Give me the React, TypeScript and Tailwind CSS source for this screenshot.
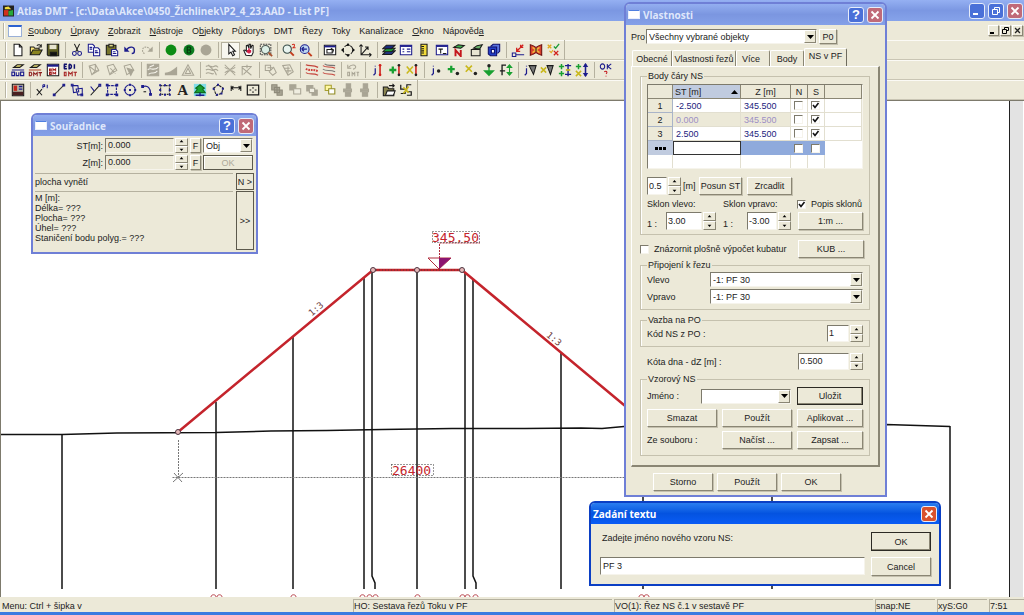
import type { ReactNode } from "react";
import clsx from "clsx";

const RAISED = "border border-t-white border-l-white border-r-[#8a8674] border-b-[#8a8674] bg-[#ece9d8]";
const SUNKEN = "border border-t-[#7d7a6c] border-l-[#7d7a6c] border-r-[#f6f4ec] border-b-[#f6f4ec]";

const G = "#a9a595";
const N = "#1c1c8c";

/* Toolbar glyphs, all on a 16x16 grid */
const glyphs: Record<string, ReactNode> = {
    new: <path d="M3.5 1.5h6l3 3v10h-9zM9.5 1.5v3h3" fill="#fff" />,
    open: <><path d="M1.5 13.5v-9h4l1 1.500h5v2" fill="#ffe97a" /><path d="M1.500 13.500l3-5.500h10.500l-3 5.500z" fill="#8a8420" /><path d="M9 3c2-2 4-1 5 1M14 1.500v3h-3" /></>,
    save: <><path d="M1.500 1.500h13v13h-12l-1-1z" fill="#5c5c20" /><path d="M4 2h8v5H4z" fill="#e6e3cf" stroke="none" /><path d="M5 10.500h7v4H5z" fill="#111" /></>,
    cut: <><path d="M5 1l4.500 9M11 1L6.500 10" /><circle cx="5" cy="12" r="2.200" stroke={N} /><circle cx="11" cy="12" r="2.200" stroke={N} /></>,
    copy: <><path d="M1.500 1.500h5l2 2v7h-7z" fill="#fff" stroke={N} /><path d="M7.500 5.500h5l2 2v7h-7z" fill="#fff" stroke={N} /><path d="M3 5h3M3 7h3M9 9h3M9 11h4" stroke={N} /></>,
    paste: <><path d="M1.500 2.500h11v11h-11z" fill="#77752c" /><path d="M4.500 1.500h5v3h-5z" fill="#ded98a" /><path d="M7.500 7.500h5l2 2v5h-7z" fill="#fff" stroke={N} /><path d="M9 10h3M9 12h4" stroke={N} /></>,
    undo: <><path d="M4 8c3-5 10-4 9 1 0 2-1 3-3 3" stroke={N} strokeWidth="1.600" /><path d="M1.500 4v6h6z" fill={N} stroke="none" /></>,
    redo: <><path d="M12 8c-3-5-10-4-9 1 0 2 1 3 3 3" stroke={G} strokeDasharray="2 1" /><path d="M14.500 4v6h-6z" fill={G} stroke="none" /></>,
    green: <circle cx="8" cy="8" r="6.200" fill="#0c8c14" stroke="none" />,
    greenB: <><circle cx="8" cy="8" r="6.200" fill="#0c7c20" stroke="none" /><path d="M6 4.500h3l1 1.500-1 2H6zM6 8h3l1 2-1 1.500H6zM6 4.500v7" stroke="#04330a" /></>,
    gray: <circle cx="8" cy="8" r="6.200" fill={G} stroke="none" />,
    pointer: <path d="M5.500 1.500v11l2.500-2 2 4 2-1-2-4h3z" fill="#fff" />,
    hand: <><path d="M4.500 14L2 8.500l1.500-.500 1.500 1.500V3l1.500-.500L8 6V1.500l1.500 0 .5 5 1.500-4 1.200.5v8L11 14.500z" fill="#fff" /><path d="M8 6v6M5.500 9.500h5M6.500 8v3M9.500 8v3" stroke="#d11f44" strokeWidth="1.800" /></>,
    zoomFrame: <><path d="M1.500 1.500h12v12h-12z" stroke="#444" strokeDasharray="2 1" /><circle cx="7.500" cy="7.500" r="4.700" fill="#dcefe6" stroke="#4d5a55" /><path d="M11 11l4 4" stroke="#a8502c" strokeWidth="2" /></>,
    zoom2: <><circle cx="6" cy="7" r="4.700" fill="#e7f3ee" stroke="#354a46" /><path d="M9.500 10.500l4 4" stroke="#c23c1c" strokeWidth="2.200" /><path d="M11.500 2c3-2 4 1 1 3.500h3" stroke="#d12a1c" /></>,
    zoomBack: <><circle cx="6.500" cy="7" r="5" fill="#bcd6f0" stroke={N} /><path d="M3 7h6M3 7l2.500-2.500M3 7l2.500 2.500" stroke={N} strokeWidth="1.600" /><path d="M10.500 11l4 4" stroke="#c23c1c" strokeWidth="2.200" /></>,
    sheetRot: <><path d="M1.500 2.500h13v11h-13z" fill="#fff" /><path d="M1.500 4h13" stroke={N} strokeWidth="2" /><path d="M4.500 7.500h6v4h-6z" /><path d="M9 6l3 2-1 3" /></>,
    compass: <><circle cx="8" cy="8" r="5.500" strokeDasharray="5 2" /><path d="M8 0l2.500 3h-5zM8 16l2.500-3h-5zM0 8l3-2.500v5zM16 8l-3-2.500v5z" fill="#111" stroke="none" /></>,
    axis: <path d="M3.500 2v11.500H15M3.500 13.500l8-9M1.500 4l2-2 2 2M8 4.500h3.500V8M13 11.500l2 2-2 2" />,
    layers: <><path d="M1 13l4-4h10l-4 4z" fill="#27389c" /><path d="M1 10l4-4h10l-4 4z" fill="#1d9c38" /><path d="M1 6.500l4-4h10l-4 4z" fill="#1a2a7c" /></>,
    list: <><path d="M1.500 2.500h13v11h-13z" fill="#fff" stroke={N} /><path d="M1.500 3.500h13" stroke={N} strokeWidth="2" /><path d="M4 7h2M4 10h2M9 7h4M9 10h4" stroke={N} /></>,
    ruler: <><path d="M4.500 1.500h7v13h-7z" fill="#f3dc3a" /><path d="M5 4h3M5 6.500h3M5 9h3M5 11.500h3" /></>,
    winT: <><path d="M1.500 2.500h13v11h-13z" fill="#fff" stroke={N} /><path d="M1.500 3.500h13" stroke={N} strokeWidth="2" /><path d="M4 7h5M6.500 7v5M9 12h4" /></>,
    handN: <><path d="M2 5l5-3 7 1-4 3z" fill="#3fb04c" /><path d="M4 15V8l6 7V8" stroke="#c4161c" strokeWidth="2.200" /></>,
    handBox: <><path d="M1.500 7.500h10v7h-10z" fill="#e7e4d2" /><path d="M4 6l4-3 6-1-3 5z" fill="#68b06a" /></>,
    cube: <><path d="M4 4l3-2.500h7.500v8L12 12" stroke="#10106c" fill="#5a74e0" /><path d="M1.500 4.500H11v10H4l-2.500-2z" fill="#2440c8" stroke="#10106c" /><path d="M5 7.500h3.500v4H5z" fill="#fff" stroke="#10106c" /></>,
    angle: <><path d="M1.500 11.500h4v4h-4zM5.500 13.500H15" stroke={N} /><path d="M14 2L6.500 9.500M6.500 5.500v4h4M11 2v3h3" stroke="#d1201c" strokeWidth="1.500" /></>,
    redBlock: <><path d="M1.500 2l3 1 3.500 2 3.500-2 3-1v12l-3-1L8 11l-3.500 2-3 1z" fill="#d8402c" stroke="#6a1010" /><path d="M4 5l8 6M12 5l-8 6" stroke="#f0b63a" strokeWidth="1.800" /><path d="M8 6v4" /></>,
    checks: <><path d="M2 2l4 4M6 2L2 6" stroke="#e0a71c" strokeWidth="1.500" /><path d="M9 4l2 2 4-5" stroke="#1d9c38" strokeWidth="1.500" /><path d="M4 9l2 2 2-3" stroke="#e0a71c" /><path d="M9 9l5 5M14 9l-5 5" stroke="#d1201c" strokeWidth="1.500" /></>,
    budo: <><path d="M3 5l4-3 7 0-4 3z" fill="#eadf77" /><path d="M1 8h14M1 10.500h3v4H1zM6 10.500v4h3v-4M11 10.500h3.500v4H11z" stroke={N} strokeWidth="1.300" /></>,
    dmtHand: <><path d="M3 5l4-3 7 0-4 3z" fill="#eadf77" /><path d="M1 8h14" stroke="#b84a2c" /><path d="M1.500 10.500h2l1 2-1 2h-2zM6.500 15v-4l2 2 2-2v4M12 11h4M14 11v4" stroke="#8c1c1c" /></>,
    dmtWin: <><path d="M1.500 1.500h13v13h-13z" fill="#fff" /><path d="M1.500 3h13" stroke={N} strokeWidth="2.500" /><path d="M4 7h2v2H4zM8 9V6.500l1.500 1.500L11 6.500V9M4 11h2v2H4zM8 13v-2.500l1.500 1.500 1.500-1.500V13" stroke="#a42020" /></>,
    edi: <><path d="M1 1.500h3.500M1 4h3M1 6.500h3.500M1.500 1.500v5M7 1.500v5c3 0 4-5 0-5M13 1.500v5" stroke="#10106c" strokeWidth="1.700" /><path d="M1.500 10.500v4h2v-4zM6.500 15v-4.500l2 2 2-2V15M12 10.500h4M14 10.500V15" stroke="#a42020" /></>,
    tri: <path d="M2.500 3.500l7-2 4 7-8 5zM2.500 3.500l7 5.500h4M9.500 1.500V9l-4 4.500" stroke={G} />,
    tri2: <path d="M2.500 3.500l7-2 4 7-8 5zM6 6l6 6M12 6l-6 6" stroke={G} />,
    tri3: <><path d="M2.500 3.500l7-2 4 7-8 5z" stroke={G} /><path d="M6 6l7 2-3 6z" fill={G} stroke={G} /></>,
    mesh: <><path d="M1.500 1.500h13v13h-13z" fill={G} stroke={G} /><path d="M2 8c3-4 6 2 12-3M3 13c3-4 6 1 10-4M4 5c2-2 4-1 5-3" stroke="#f5f3ea" /></>,
    hill: <path d="M1 14V11c5 0 8-2 14-7v10z" fill={G} stroke="none" />,
    warn: <path d="M8 2L1.500 14h13zM8 6L5 12h6z" stroke={G} />,
    contour: <path d="M1 4c4-3 6 2 9 0s4 0 5 1M1 8c4-3 6 2 9 0s4 0 5 1M1 12c4-3 6 2 9 0M4 2c2 4 8 6 9 12" stroke={G} />,
    contour2: <path d="M2 2l12 12M14 2L2 14M2 5c4 3 8 3 12 0M2 11c4-3 8-3 12 0" stroke={G} />,
    contour3: <path d="M2.500 14V4h11M2 5l11 9M13 4L4 13M8 2v4" stroke={G} />,
    gridA: <path d="M1.500 2.500h6v6h-6zM6 10l5-5 3 6-4 3zM4 5.500h7" stroke={G} />,
    gridB: <path d="M2 3l8-1 4 8-6 4zM4 6h6M6 9h6M8 4v8" stroke={G} />,
    hatch: <><path d="M1 2c4 2 8 0 14 3M1 11c4 3 8 0 14 3" stroke="#c4443c" strokeWidth="1.400" /><path d="M1 6.500c4 3 8 0 14 3" stroke="#d1403c" strokeWidth="2.200" strokeDasharray="2 1" /></>,
    hatch2: <><path d="M1 3c4 3 8 0 14 3M1 11c4 3 8 0 14 3" stroke="#c4443c" /><path d="M1 7c4 3 8 0 14 3M3 1c3 3 8 1 12 2" stroke="#777" /></>,
    undoDmt: <><path d="M3 5c3-4 9-3 8 0-.5 2-2 2-3 2M2 2v4h4" stroke={G} /><path d="M2 10.500v4h2v-4zM7 15v-4l1.500 1.500L10 11v4M12 10.500h3M13.500 10.500V15" stroke={G} /></>,
    lineI: <><path d="M11.500 2v12" stroke="#d1201c" strokeWidth="1.800" /><circle cx="11.500" cy="2.500" r="1.500" fill="#d1201c" stroke="none" /><circle cx="11.500" cy="13.500" r="1.500" fill="#d1201c" stroke="none" /><path d="M6 6v6l-2 2M6 3v1" stroke={N} strokeWidth="1.400" /></>,
    lineAdd: <><path d="M12.500 2v12" stroke="#d1201c" strokeWidth="1.800" /><circle cx="12.500" cy="2.500" r="1.500" fill="#222" stroke="none" /><circle cx="12.500" cy="13.500" r="1.500" fill="#222" stroke="none" /><path d="M5.500 4v8M1.500 8h8" stroke="#18a030" strokeWidth="2.600" /></>,
    lineDel: <><path d="M12.500 2v12" stroke="#d1201c" strokeWidth="1.800" /><circle cx="12.500" cy="2.500" r="1.500" fill="#222" stroke="none" /><circle cx="12.500" cy="13.500" r="1.500" fill="#222" stroke="none" /><path d="M2 4l7 8M9 4l-7 8" stroke="#c9b81c" strokeWidth="1.800" /></>,
    ptI: <><path d="M5 6v6l-2 2M5 3v1" stroke={N} strokeWidth="1.400" /><circle cx="11" cy="9" r="2" fill="#222" stroke="none" /></>,
    ptAdd: <><path d="M6 3v8M2 7h8" stroke="#18a030" strokeWidth="2.600" /><circle cx="13" cy="12" r="2" fill="#222" stroke="none" /></>,
    ptDel: <><path d="M2 3l7 7M9 3l-7 7" stroke="#c9b81c" strokeWidth="1.800" /><circle cx="13" cy="12" r="2" fill="#222" stroke="none" /></>,
    ptMove: <><path d="M8 3v10M3 9h10l-5 5z" fill="#18a030" stroke="#18a030" strokeWidth="1.500" /><circle cx="8" cy="3" r="2" fill="#222" stroke="none" /></>,
    heights: <><path d="M8 2.500H3.500V14M1 9h6" strokeWidth="1.500" /><path d="M12 3v10M9.500 5L12 2l2.500 3zM9.500 11l2.500 3 2.500-3z" fill="#18a030" stroke="#18a030" /></>,
    coneI: <><path d="M4 6v6l-2 2M4 3v1" stroke={N} strokeWidth="1.400" /><path d="M7 3h8l-3 10z" fill="#777" /></>,
    coneX: <><path d="M1 5l6 6M7 5l-6 6" stroke="#c9b81c" strokeWidth="1.800" /><path d="M8 3h7l-3 10z" fill="#777" /></>,
    pairAdd: <><path d="M11.500 1v14M8 3h7M8 13h7" stroke={N} strokeWidth="1.600" /><path d="M4 1v6M1 4h6M4 9v6M1 12h6" stroke="#18a030" strokeWidth="1.700" /><path d="M9 8h5" stroke="#c9b81c" strokeWidth="2" /></>,
    pairDel: <><path d="M12 1v14" stroke={N} strokeWidth="1.800" /><path d="M10 4l2-3 2 3zM10 12l2 3 2-3z" fill={N} stroke={N} /><path d="M4 1v6M1 4h6" stroke="#18a030" strokeWidth="1.700" /><path d="M1 9l6 6M7 9l-6 6" stroke="#c9b81c" strokeWidth="1.700" /></>,
    ok: <><ellipse cx="4" cy="4" rx="2.500" ry="3" stroke={N} /><path d="M9.500 1v6M14 1l-4 3 4 3" stroke={N} /><path d="M6 10c3-2 4 1 2 2.500M8 14.500v1" stroke="#c4161c" /></>,
    picture: <><path d="M1.500 1.500h13v13h-13z" fill="#b8b4a4" /><path d="M3 3h4v6H3z" fill="#c4261c" stroke="none" /><path d="M2 10h12v4H2z" fill="#4a2020" stroke="none" /><path d="M9 4h4M9 7h4" stroke={N} strokeWidth="1.600" /></>,
    xpt: <><path d="M2 7l6 7M8 7l-6 7" /><path d="M9 2v4M9 2h2v2H9M14 2v4" stroke={N} /></>,
    seg: <><path d="M3 13L13 3" stroke="#333" /><path d="M1.500 12.500h2v2h-2zM12.500 1.500h2v2h-2z" fill={N} stroke={N} /></>,
    poly: <path d="M3 3h6l1 7-6 1zM7 7l7-1v7l-5 1zM1.500 1.500h2v2h-2zM12.500 12.500h2v2h-2z" stroke={N} />,
    ticks: <><path d="M3 14L13 3" /><path d="M3 4l4 5M12.500 1.500h2v2h-2z" stroke={N} strokeWidth="1.300" /></>,
    rect: <><path d="M3 3h10v10H3z" stroke={N} strokeDasharray="3 1" /><path d="M1.500 1.500h2v2h-2zM12.500 1.500h2v2h-2zM1.500 12.500h2v2h-2zM12.500 12.500h2v2h-2z" fill={N} stroke={N} /></>,
    circle: <><circle cx="8" cy="8" r="6" stroke={N} /><path d="M7.500 7.500h1v1h-1zM7.500 1.500h1v1h-1zM7.500 13.500h1v1h-1zM1.500 7.500h1v1h-1zM13.500 7.500h1v1h-1z" fill={N} stroke={N} /></>,
    arc: <><path d="M3 4c6-2 9 2 9 8" stroke={N} strokeWidth="1.400" /><path d="M2 3h2v2H2zM11 12h2v2h-2z" fill={N} stroke={N} /><path d="M4 10h3" /></>,
    area: <><path d="M3 3h10v10H3z" stroke="#333" strokeDasharray="2 1" /><path d="M2 2h1v1H2zM7.500 2h1v1h-1zM13 2h1v1h-1zM2 7.500h1v1H2zM13 7.500h1v1h-1zM2 13h1v1H2zM7.500 13h1v1h-1zM13 13h1v1h-1z" fill={N} stroke={N} /></>,
    tree: <><path d="M1 1h14v14H1z" fill="#7fdce8" stroke="none" /><path d="M8 2l5 4-2 1 3 4H2l3-4-2-1z" fill="#18a030" stroke="#0d6c1c" /><path d="M8 11v4M3 14h10" stroke={N} strokeWidth="1.600" /></>,
    lasso: <><path d="M3 6l5-4 6 4-2 6-6 2z" strokeDasharray="3 1" /><path d="M7.500 1.500h1v1h-1zM2.500 6h1v1h-1zM13 6h1v1h-1zM6.500 13h1v1h-1zM11.500 11.500h1v1h-1z" fill={N} stroke={N} /></>,
    dim: <path d="M2.500 3v6M13.500 3v6M3 5.500h10M5 3.500l-2 2 2 2M11 3.500l2 2-2 2" />,
    frame: <><path d="M1.500 2.500h13v11h-13z" strokeWidth="1.400" /><path d="M8 4.500v2M8 9.500v2M4 8h2M10 8h2" /></>,
    stackA: <path d="M2 2h6v6H2zM5 5h6v6H5zM8 8h6v6H8z" fill={G} stroke="#8e8a7a" />,
    stackB: <><path d="M2 2h7v6H2z" fill={G} stroke={G} /><path d="M6.500 6.500h8v6h-8z" fill="#efede0" stroke={G} /></>,
    stackC: <><path d="M2 3h7v6H2zM8 8h6v6H8z" fill={G} stroke={G} /><path d="M5 6h6v5H5z" fill="#efede0" stroke={G} /></>,
    stackY: <><path d="M2.500 2.500h7v6h-7z" fill="#fff8a0" stroke="#a8a030" /><path d="M6.500 6.500h7v6h-7z" fill="#fff" stroke="#8f8a20" /></>,
    grp: <path d="M6 1h5v5H6zM3 7h9v3H3zM5 11h6v4H5z" fill={G} stroke={G} />,
    exportIc: <><path d="M1.500 4.500h5l1 2h6v8h-12z" fill="#8a8450" /><path d="M4 14l2-5h9l-2 5z" fill="#fff" /><path d="M8 3h6M12 1l2 2-2 2" /></>,
    cut2: <><path d="M2 2v5h5M2 12h5v-2M14 2H9v5M9 14h5v-4H9" strokeWidth="1.400" /><path d="M5 5l6 6M11 4l-6 8" stroke="#c9b81c" strokeWidth="1.800" /></>,
};

const toolbars: string[][][] = [
    [
        ["new", "open", "save"],
        ["cut", "copy", "paste", "undo", "redo"],
        ["green", "greenB", "gray"],
        ["pointer", "hand", "zoomFrame"],
        ["zoom2", "zoomBack"],
        ["sheetRot", "compass", "axis"],
        ["layers", "list", "ruler", "winT", "handN", "handBox", "cube"],
        ["angle", "redBlock", "checks"],
    ],
    [
        ["budo", "dmtHand", "dmtWin", "edi"],
        ["tri", "tri2", "tri3"],
        ["mesh", "hill", "warn"],
        ["contour", "contour2", "contour3"],
        ["gridA", "gridB"],
        ["hatch", "hatch2"],
        ["undoDmt"],
        ["lineI", "lineAdd", "lineDel"],
        ["ptI", "ptAdd", "ptDel", "ptMove", "heights"],
        ["coneI", "coneX", "pairAdd", "pairDel"],
        ["ok"],
    ],
    [
        ["picture"],
        ["xpt", "seg", "poly", "ticks", "rect", "circle", "arc", "area", "textA", "tree", "lasso", "dim", "frame"],
        ["stackA", "stackB", "stackC", "stackY", "grp", "grp"],
        ["exportIc", "cut2"],
    ],
];

const groupWidth: Record<number, string> = {
    1: "w-[18px]",
    2: "w-[35px]",
    3: "w-[53px]",
    4: "w-[70px]",
    5: "w-[88px]",
    6: "w-[106px]",
    7: "w-[123px]",
    13: "w-[229px]",
};

const menus = [
    ["", "S", "oubory"],
    ["", "Ú", "pravy"],
    ["", "Z", "obrazit"],
    ["", "N", "ástroje"],
    ["O", "b", "jekty"],
    ["Půdorys", "", ""],
    ["DMT", "", ""],
    ["Řezy", "", ""],
    ["Toky", "", ""],
    ["Kanalizace", "", ""],
    ["", "O", "kno"],
    ["Nápověd", "a", ""],
];

function Toolbar({ groups, end }: { groups: string[][]; end: boolean }) {
    return (
        <div className="flex h-5 items-center border-t border-t-[#fbfaf5] border-b border-b-[#c9c5b4] pl-[5px]">
            <span className="mr-[2px] h-4 w-[2px] border-l border-[#b9b5a3] bg-white" />
            {groups.map((names, i) => (
                <div key={i} className="flex items-center">
                    {i > 0 && <span className="mr-[2px] ml-[3px] h-4 w-px bg-[#b5b19f]" />}
                    <div className={clsx("flex", groupWidth[names.length])}>
                        {names.map((name, k) => (
                            <button
                                key={k}
                                aria-label={name}
                                className={clsx(
                                    "flex h-[17px] flex-1 items-center justify-center",
                                    name === "pointer" && "border border-[#b5b19f] bg-[#f8f7f0]"
                                )}
                            >
                                {name === "textA" ? (
                                    <span className="font-['Liberation_Serif',serif] text-[15px] leading-4 font-bold">A</span>
                                ) : (
                                    <svg width="14" height="14" viewBox="0 0 16 16" fill="none" stroke="#1a1a1a" strokeWidth="1.2" className="shrink-0">
                                        {glyphs[name]}
                                    </svg>
                                )}
                            </button>
                        ))}
                    </div>
                </div>
            ))}
            {end && <span className="ml-[2px] h-5 w-px bg-[#b5b19f]" />}
        </div>
    );
}

function Cross({ size }: { size: number }) {
    return (
        <svg width={size} height={size} viewBox="0 0 10 10" stroke="currentColor" strokeWidth="1.8">
            <path d="M1.500 1.500l7 7M8.500 1.500l-7 7" />
        </svg>
    );
}

function CapButton({ label, color, children }: { label: string; color: string; children: ReactNode }) {
    return (
        <button
            aria-label={label}
            className={clsx("flex h-4 w-4 items-center justify-center rounded-[3px] border border-[#e6ecfa] text-[13px] leading-none font-bold text-white", color)}
        >
            {children}
        </button>
    );
}

function Window({ title, active, className, children }: { title: string; active?: boolean; className: string; children: ReactNode }) {
    return (
        <section
            className={clsx(
                "absolute flex flex-col rounded-t-md border-2 bg-[#ece9d8]",
                active ? "border-[#0b3fc4]" : "border-[#6f7fd6]",
                className
            )}
        >
            <header
                className={clsx(
                    "flex h-[21px] shrink-0 items-center gap-[3px] rounded-t px-[2px]",
                    active
                        ? "bg-linear-to-b from-[#2a7df0] via-[#0453e0] to-[#0a5cf5] text-white"
                        : "bg-linear-to-b from-[#93aef0] via-[#7b96e0] to-[#84a0e8] text-[#dfe7fb]"
                )}
            >
                {!active && <span className="h-[9px] w-3 border border-[#e8eefc] border-t-[#4f7fe0] bg-white" />}
                <h2 className="flex-1 font-['Open_Sans',sans-serif] text-[10px] font-bold">{title}</h2>
                {!active && <CapButton label="Help" color="bg-[#4a70d8]">?</CapButton>}
                <CapButton label="Close" color={active ? "bg-[#d9512c]" : "bg-[#c06a78]"}><Cross size={10} /></CapButton>
            </header>
            {children}
        </section>
    );
}

function Button({ children, className, focus }: { children: ReactNode; className?: string; focus?: boolean }) {
    return (
        <button
            className={clsx(
                "flex items-center justify-center whitespace-nowrap",
                focus ? "border border-[#2c2a24] shadow-[inset_-1px_-1px_0_#8a8674]" : clsx(RAISED, "shadow-[1px_1px_0_#c4c0ae]"),
                className
            )}
        >
            {children}
        </button>
    );
}

function Spinner() {
    return (
        <span className="flex h-full w-[13px] flex-col">
            {["up", "down"].map((dir) => (
                <button key={dir} aria-label={dir} className={clsx("flex flex-1 items-center justify-center", RAISED)}>
                    <svg width="5" height="3" viewBox="0 0 6 4">
                        <path d={dir === "up" ? "M3 0l2.500 3h-5z" : "M3 4l2.500-3h-5z"} />
                    </svg>
                </button>
            ))}
        </span>
    );
}

function SpinField({ label, value, className, gray }: { label: string; value: string; className: string; gray?: boolean }) {
    return (
        <span className="flex h-full items-stretch gap-px">
            <input aria-label={label} defaultValue={value} className={clsx("pb-px outline-none", SUNKEN, gray ? "bg-[#ece9d8] px-[2px]" : "bg-white px-px", className)} />
            <Spinner />
        </span>
    );
}

function Select({ label, value, className }: { label: string; value: string; className?: string }) {
    return (
        <span className={clsx("relative flex h-[15px]", className)}>
            <select aria-label={label} className={clsx("w-full appearance-none bg-white pl-[2px] outline-none", SUNKEN)}>
                <option>{value}</option>
            </select>
            <span className={clsx("pointer-events-none absolute inset-y-px right-px flex w-3 items-center justify-center", RAISED)}>
                <svg width="7" height="4" viewBox="0 0 7 4"><path d="M0 0h7L3.500 4z" /></svg>
            </span>
        </span>
    );
}

function Check({ label, checked, children }: { label?: string; checked?: boolean; children?: ReactNode }) {
    return (
        <label className="flex items-center gap-[5px] whitespace-nowrap">
            <span className="grid">
                <input
                    type="checkbox"
                    aria-label={label}
                    defaultChecked={checked}
                    className={clsx("peer col-start-1 row-start-1 h-[9px] w-[9px] appearance-none bg-white", SUNKEN)}
                />
                <svg width="9" height="9" viewBox="0 0 9 9" fill="none" stroke="#111" strokeWidth="1.6" className="pointer-events-none invisible col-start-1 row-start-1 peer-checked:visible">
                    <path d="M2 4l2 2.500L7.500 2" />
                </svg>
            </span>
            {children}
        </label>
    );
}

function Group({ title, className, children }: { title: string; className: string; children: ReactNode }) {
    return (
        <fieldset className={clsx("border border-[#c5c1ae] px-[6px] shadow-[inset_1px_0_0_#fff]", className)}>
            <legend className="h-[10px] px-px leading-[10px]">{title}</legend>
            {children}
        </fieldset>
    );
}

const points = [
    { n: "1", st: "-2.500", z: "345.500", s: true },
    { n: "2", st: "0.000", z: "345.500", s: true, off: true },
    { n: "3", st: "2.500", z: "345.500", s: true },
];

function PointTable() {
    const cell = "border-r border-b border-[#e2dfd0]";
    const head = "border-r border-b border-[#8a8674] font-normal";
    return (
        <div className={clsx("h-[85px] overflow-hidden bg-white", SUNKEN)}>
            <table className="w-full table-fixed border-separate border-spacing-0 text-[#22227c]">
                <colgroup>
                    <col className="w-[25px]" />
                    <col className="w-[68px]" />
                    <col className="w-[50px]" />
                    <col className="w-[17px]" />
                    <col className="w-[17px]" />
                    <col />
                </colgroup>
                <thead className="bg-[#ece9d8] text-[#222]">
                    <tr className="h-[14px]">
                        <th className={head} />
                        <th className={clsx(head, "bg-[#c0cbdf] px-[2px]")}>
                            <span className="flex items-center justify-between">ST [m]<svg width="7" height="4" viewBox="0 0 7 4"><path d="M0 4h7L3.500 0z" /></svg></span>
                        </th>
                        <th className={head}>Z [m]</th>
                        <th className={head}>N</th>
                        <th className={head}>S</th>
                        <th className={head} />
                    </tr>
                </thead>
                <tbody>
                    {points.map((p) => (
                        <tr key={p.n} className={clsx("h-[14px]", p.off && "text-[#9c8fc4]")}>
                            <td className="border-r border-b border-[#a9b4c8] bg-[#ece9d8] text-center text-[#222]">{p.n}</td>
                            <td className={clsx(cell, "pl-[3px]", p.off && "bg-[#ece9d8]")}>{p.st}</td>
                            <td className={clsx(cell, "pl-[3px]", p.off && "bg-[#ece9d8]")}>{p.z}</td>
                            <td className={clsx(cell, "pl-[3px]")}><Check label={"N " + p.n} /></td>
                            <td className={clsx(cell, "pl-[3px]")}><Check label={"S " + p.n} checked={p.s} /></td>
                            <td className={cell} />
                        </tr>
                    ))}
                    <tr className="h-[14px] bg-[#8faadc]">
                        <td className="bg-[#c0cbdf] text-center text-[#111]">
                            <svg width="11" height="3" viewBox="0 0 11 3" className="mx-auto"><path d="M0 0h3v3H0zM4 0h3v3H4zM8 0h3v3H8z" /></svg>
                        </td>
                        <td className="border border-[#333] bg-white" />
                        <td />
                        <td className="pl-[3px]"><Check label="N new" /></td>
                        <td className="pl-[3px]"><Check label="S new" /></td>
                        <td className="bg-white" />
                    </tr>
                    <tr className="h-[14px]">
                        <td className={cell} /><td className={cell} /><td className={cell} /><td className={cell} /><td className={cell} /><td />
                    </tr>
                </tbody>
            </table>
        </div>
    );
}

function Properties() {
    const tab = "h-4 rounded-t-[2px] border border-b-0 border-t-white border-l-white border-r-[#8a8674] whitespace-nowrap";
    return (
        <Window title="Vlastnosti" className="top-[2px] left-[624px] w-[263px]">
            <div className="flex items-center gap-[2px] px-[5px] pt-1">
                <span className="w-[13px]">Pro</span>
                <Select label="Pro" value="Všechny vybrané objekty" className="w-[171px]" />
                <Button className="h-[15px] w-[18px]">P0</Button>
            </div>
            <div className="mt-1 flex items-end px-[6px]">
                <button className={clsx(tab, "w-10")}>Obecné</button>
                <button className={clsx(tab, "w-16")}>Vlastnosti řezů</button>
                <button className={clsx(tab, "w-[34px] pr-1")}>Více</button>
                <button className={clsx(tab, "w-[34px]")}>Body</button>
                <button className="h-[18px] w-[43px] rounded-t-[2px] border border-b-0 border-t-white border-l-white border-r-[#6f6c5e] pb-1">NS v PF</button>
            </div>
            <div className="mx-[5px] border-2 border-t border-l border-t-white border-l-white border-r-[#8a8674] border-b-[#8a8674] px-2 pt-1 pb-[9px]">
                <Group title="Body čáry NS" className="pt-[3px] pb-1">
                    <PointTable />
                    <div className="mt-2 flex h-[18px] items-center">
                        <SpinField label="Posun" value="0.5" className="w-5" />
                        <span className="w-[18px] pl-[2px]">[m]</span>
                        <Button className="h-[18px] w-[43px]">Posun ST</Button>
                        <Button className="ml-[5px] h-[18px] w-[45px]">Zrcadlit</Button>
                    </div>
                    <div className="mt-1 flex h-[10px] items-center">
                        <span className="w-[76px]">Sklon vlevo:</span>
                        <span className="w-[74px]">Sklon vpravo:</span>
                        <Check checked>Popis sklonů</Check>
                    </div>
                    <div className="mt-[3px] flex h-[18px] items-stretch">
                        <span className="w-[19px] self-end">1 :</span>
                        <SpinField label="Sklon vlevo" value="3.00" className="w-9" />
                        <span className="ml-[7px] w-6 self-end">1 :</span>
                        <SpinField label="Sklon vpravo" value="-3.00" className="w-[30px]" />
                        <Button className="ml-[7px] flex-1">1:m ...</Button>
                    </div>
                </Group>
                <div className="mt-[5px] flex h-[18px] items-center justify-between pr-[6px]">
                    <Check>Znázornit plošně výpočet kubatur</Check>
                    <Button className="h-full w-[66px]">KUB ...</Button>
                </div>
                <Group title="Připojení k řezu" className="mt-[2px] pt-[2px] pb-[5px]">
                    <div className="flex items-center justify-between">Vlevo<Select label="Vlevo" value="-1: PF 30" className="w-[153px]" /></div>
                    <div className="mt-[2px] flex items-center justify-between">Vpravo<Select label="Vpravo" value="-1: PF 30" className="w-[153px]" /></div>
                </Group>
                <Group title="Vazba na PO" className="mt-[5px] pb-1">
                    <div className="flex h-[17px] items-center justify-between">Kód NS z PO :<SpinField label="Kód NS z PO" value="1" className="w-[22px]" /></div>
                </Group>
                <div className="mt-[6px] flex h-[17px] items-center justify-between px-[7px]">
                    Kóta dna - dZ [m] :
                    <SpinField label="Kóta dna" value="0.500" className="w-[51px]" />
                </div>
                <Group title="Vzorový NS" className="mt-1 pt-[3px] pb-[6px]">
                    <div className="flex items-center">
                        <span className="w-[54px]">Jméno :</span>
                        <Select label="Jméno" value="" className="w-[90px]" />
                        <Button focus className="ml-[6px] h-[18px] flex-1">Uložit</Button>
                    </div>
                    <div className="mt-1 grid h-[18px] grid-cols-[70px_70px_1fr] gap-x-[5px]">
                        <Button>Smazat</Button>
                        <Button>Použít</Button>
                        <Button>Aplikovat ...</Button>
                    </div>
                    <div className="mt-1 grid h-[18px] grid-cols-[70px_70px_1fr] items-stretch gap-x-[5px]">
                        <span className="self-center">Ze souboru :</span>
                        <Button>Načíst ...</Button>
                        <Button>Zapsat ...</Button>
                    </div>
                </Group>
            </div>
            <div className="mt-[6px] mb-1 flex h-[18px] gap-1 pl-[27px]">
                <Button className="w-[60px]">Storno</Button>
                <Button className="w-[60px]">Použít</Button>
                <Button className="w-[60px]">OK</Button>
            </div>
        </Window>
    );
}

function Coordinates() {
    return (
        <Window title="Souřadnice" className="top-[113px] left-[31px] w-[227px]">
            <div className="grid grid-cols-[1fr_83px_11px_50px] gap-x-[2px] gap-y-[2px] px-[3px] pt-[2px]">
                <span className="self-center text-right">ST[m]:</span>
                <span className="h-[15px]"><SpinField gray label="ST" value="0.000" className="w-[69px]" /></span>
                <Button className="h-[15px]">F</Button>
                <Select label="Režim" value="Obj" />
                <span className="self-center text-right">Z[m]:</span>
                <span className="h-[15px]"><SpinField gray label="Z" value="0.000" className="w-[69px]" /></span>
                <Button className="h-[15px]">F</Button>
                <button disabled className="border border-[#5c594c] text-[#aca899] shadow-[inset_1px_1px_0_#fff]">OK</button>
            </div>
            <div className="mt-[3px] grid grid-cols-[1fr_18px] gap-x-[3px] gap-y-px px-[2px] pb-[2px]">
                <p className="h-[17px] border-t border-[#b5b19f] pt-[2px]">plocha vynětí</p>
                <button className="border border-[#5c594c]">N &gt;</button>
                <div className="h-[59px] border-t border-[#b5b19f] pt-px leading-[10px]">
                    <p>M [m]:</p>
                    <p>Délka= ???</p>
                    <p>Plocha= ???</p>
                    <p>Úhel= ???</p>
                    <p>Staničení bodu polyg.= ???</p>
                </div>
                <button className="border border-[#5c594c]">&gt;&gt;</button>
            </div>
        </Window>
    );
}

function TextPrompt() {
    return (
        <Window active title="Zadání textu" className="top-[501px] left-[589px] w-[352px]">
            <div className="grid grid-cols-[1fr_60px] gap-x-[6px] gap-y-[6px] py-2 pr-2 pl-[9px]">
                <label htmlFor="vzor" className="pl-[2px]">Zadejte jméno nového vzoru NS:</label>
                <Button focus className="h-[19px]">OK</Button>
                <input id="vzor" autoFocus defaultValue="PF 3" className={clsx("h-[18px] bg-white px-[2px] outline-none", SUNKEN)} />
                <Button className="h-[19px]">Cancel</Button>
            </div>
        </Window>
    );
}

const stakes = [
    [216, 402],
    [293, 337],
    [364, 277],
    [417, 270],
    [465, 272],
    [561, 353],
    [643, 426],
    [772, 425],
];

const nodes = [[178, 432], [373, 270], [417, 270], [462, 270]];
const footMarks = [213, 219, 293, 362, 369, 375, 417, 462, 467, 475, 641, 646];

function Drawing() {
    return (
        <svg className="h-full w-full" fontFamily="DejaVu Sans Mono, monospace">
            <g transform="translate(-1 -101)" fill="none" stroke="#111" strokeWidth="1.500">
                <path d="M0 434.500H62L117 433l99-.5 55-1.500 56-.5 55-1 70-1h73l56-.5 21 .5 22-2 262-2 64 2" />
                <path d="M62 434v155M950 426v163" />
                {stakes.map(([x, y]) => <path key={x} d={`M${x} ${y}V589`} />)}
                <path d="M372 270v306l3 7v6M473 280v296l3 7v6" />
                <path d="M178 432L373 270H462L630 410" stroke="#c4242c" strokeWidth="2.500" />
                <path d="M373 270H462" stroke="#5c3a3a" strokeWidth="1" strokeDasharray="1 2" />
                {nodes.map(([x, y]) => <circle key={x} cx={x} cy={y} r="2.500" fill="#e6b8b8" stroke="#4c3440" strokeWidth="1" />)}
                <path d="M428 258h23l-12 11z" stroke="#b02c3c" fill="#fff" strokeWidth="1" />
                <path d="M439 258h12l-12 11z" stroke="none" fill="#8c1470" />
                <path d="M439.500 258v-15H480" stroke="#b02c3c" strokeDasharray="2 1" strokeWidth="1" />
                <path d="M178.500 440v37M172.500 477.500H630" stroke="#777" strokeWidth="1" strokeDasharray="2 1" />
                <path d="M173 482l10-9M174 473l8 9" stroke="#777" strokeWidth="1" />
                <path d="M432.500 231.500h47v11h-47zM391.500 464.500h42v11h-42z" stroke="#333" strokeWidth="1" strokeDasharray="1 2" />
                {footMarks.map((x) => <path key={x} d={`M${x - 2} 597c0-3 5-3 5 0`} stroke="#b8444c" strokeWidth="1" />)}
                <g fill="#c4242c" stroke="none" fontSize="13">
                    <text x="432" y="242">345.50</text>
                    <text x="392" y="475">26400</text>
                </g>
                <g fill="#6c3c3c" stroke="none" fontSize="9" textAnchor="middle">
                    <text x="316" y="312" transform="rotate(-40 316 309)">1:3</text>
                    <text x="554" y="342" transform="rotate(40 554 339)">1:3</text>
                </g>
            </g>
        </svg>
    );
}

export default function App() {
    return (
        <div className="relative flex h-screen flex-col overflow-hidden bg-[#ece9d8] font-['Liberation_Sans',Arial,sans-serif] text-[9px] leading-3 text-[#222]">
            <header className="flex h-[21px] shrink-0 items-center gap-[3px] bg-linear-to-b from-[#95b0f2] via-[#7b97e2] to-[#86a3ea] pr-px pl-[3px]">
                <svg width="11" height="12" viewBox="0 0 12 12">
                    <path d="M0 0h12v12H0z" fill="#222" />
                    <path d="M2 2l4-1 3 3H2z" fill="#f3dc3a" />
                    <path d="M1 5h5v6H1z" fill="#d1301c" />
                    <path d="M6 6l5-1v6H6z" fill="#28a838" />
                </svg>
                <h1 className="flex-1 font-['Noto_Sans',sans-serif] text-[10px] font-bold text-[#dfe7fb]">
                    Atlas DMT - [c:\Data\Akce\0450_Žichlinek\P2_4_23.AAD - List PF]
                </h1>
                <div className="flex gap-[3px]">
                    <CapButton label="Minimize" color="bg-[#4a70d8]"><svg width="10" height="10"><path d="M1 7h5v2H1z" fill="#fff" /></svg></CapButton>
                    <CapButton label="Restore" color="bg-[#4a70d8]"><svg width="10" height="10" fill="none" stroke="#fff"><path d="M3.500 3V1.500h5v5H7M1.500 3.500h5v5h-5z" /></svg></CapButton>
                    <CapButton label="Close" color="bg-[#c06a78]"><Cross size={10} /></CapButton>
                </div>
            </header>
            <nav className="flex h-[19px] shrink-0 items-center pl-[3px]">
                <span className="mr-[3px] h-4 w-[2px] border-l border-[#b9b5a3] bg-white" />
                <span className="h-3 w-[14px] border border-t-2 border-[#9ab0d8] border-t-[#2c62d0] bg-white" />
                <div className="flex flex-1 gap-[9px] pl-[6px]">
                    {menus.map(([pre, key, post]) => (
                        <button key={pre + key + post}>{pre}<u>{key}</u>{post}</button>
                    ))}
                </div>
                <div className="flex gap-px pr-px">
                    <Button className="h-[11px] w-[11px]"><svg width="7" height="7"><path d="M0 5h4v2H0z" /></svg></Button>
                    <Button className="h-[11px] w-[11px]"><svg width="7" height="7" fill="none" stroke="#000"><path d="M2.500 2V.5h4v3H5M.5 2.500h4v4h-4z" /></svg></Button>
                    <Button className="h-[11px] w-[11px]"><Cross size={7} /></Button>
                </div>
            </nav>
            {toolbars.map((groups, i) => <Toolbar key={i} groups={groups} end={i !== 1} />)}
            <main className="flex min-h-0 flex-1 border-t border-l border-[#7d7a6c] bg-white">
                <div className="min-w-0 flex-1"><Drawing /></div>
                <div className="mr-px w-[14px] border-l border-[#222] bg-[#e3e3e3]" />
            </main>
            <footer className="flex h-[18px] shrink-0 border-b-[3px] border-[#3a7be0] pt-[2px]">
                <span className="w-[353px] pt-px pl-[2px]">Menu: Ctrl + šipka v</span>
                <div className="flex flex-1 gap-[2px] *:border-t *:border-l *:border-[#b5b19f]">
                    <span className="flex-1">HO: Sestava řezů Toku v PF</span>
                    <span className="flex-1">VO(1): Řez NS č.1 v sestavě PF</span>
                    <span className="w-[60px]">snap:NE</span>
                    <span className="w-[50px]">xyS:G0</span>
                    <span className="w-[35px]">7:51</span>
                </div>
            </footer>
            <Coordinates />
            <Properties />
            <TextPrompt />
        </div>
    );
}
